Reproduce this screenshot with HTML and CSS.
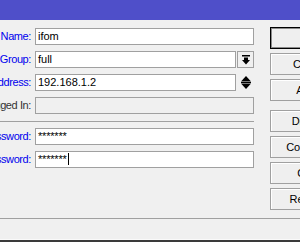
FILE: index.html
```html
<!DOCTYPE html>
<html>
<head>
<meta charset="utf-8">
<link rel="stylesheet" href="styles.css">
</head>
<body>
<div class="window">
  <div class="titlebar"></div>
  <div class="main">
    <div class="form">
      <span class="lbl">Name:</span>
      <div class="field">ifom</div>
      <span class="lbl">Group:</span>
      <div class="combo">
        <div class="field">full</div>
        <div class="dropbtn">
          <svg width="8" height="10" viewBox="0 0 8 10"><rect x="0" y="0" width="8" height="1.5" fill="#000"/><path d="M2 2.5H6V5H8L4 9.5L0 5H2Z" fill="#000"/></svg>
        </div>
      </div>
      <span class="lbl">Allowed Address:</span>
      <div class="combo">
        <div class="field">192.168.1.2</div>
        <div class="spin">
          <svg width="10" height="13" viewBox="0 0 10 13"><path d="M5 0L10 5.5H0Z" fill="#000"/><rect x="0" y="6" width="10" height="1" fill="#000"/><path d="M0 7.5H10L5 13Z" fill="#000"/></svg>
        </div>
      </div>
      <span class="lbl dim">Last Logged In:</span>
      <div class="field disabled"></div>
      <div class="sep"></div>
      <span class="lbl">Password:</span>
      <div class="field pw">*******</div>
      <span class="lbl">Confirm Password:</span>
      <div class="field pw">*******<span class="caret"></span></div>
    </div>
    <div class="buttons">
      <div class="btn default">OK</div>
      <div class="btn">Cancel</div>
      <div class="btn">Apply</div>
      <div class="btn spaced">Disable</div>
      <div class="btn">Comment</div>
      <div class="btn">Copy</div>
      <div class="btn">Remove</div>
    </div>
  </div>
  <div class="status"></div>
  <div class="frame-bottom"></div>
</div>
</body>
</html>
```
FILE: styles.css
```css
body {
  margin: 0;
  background: #f0f0f0;
  font-family: "Liberation Sans", Arial, sans-serif;
}
.window {
  width: 300px;
  height: 242px;
  overflow: hidden;
  display: flex;
  flex-direction: column;
  background: #f0f0f0;
}
.titlebar {
  height: 20px;
  flex: none;
  background: #4f4fc9;
}
.main {
  height: 198px;
  flex: none;
  box-sizing: border-box;
  padding-top: 7px;
  display: flex;
}
.form {
  flex: none;
  margin-left: -69px;
  margin-top: 1px;
  display: grid;
  grid-template-columns: 100px 219px;
  column-gap: 4px;
  row-gap: 6px;
  align-content: start;
}
.lbl {
  font-size: 11px;
  letter-spacing: -0.4px;
  line-height: 17px;
  color: #0000ee;
  text-align: right;
  white-space: nowrap;
}
.lbl.dim {
  color: #333;
}
.field {
  height: 17px;
  box-sizing: border-box;
  border: 1px solid #a0a0a0;
  background: #fff;
  font-size: 11px;
  line-height: 15px;
  padding-left: 2px;
  color: #000;
  white-space: nowrap;
  overflow: hidden;
}
.field.disabled {
  background: #f0f0f0;
}
.field.pw {
  letter-spacing: -0.2px;
}
.caret {
  display: inline-block;
  width: 1px;
  height: 12px;
  background: #000;
  vertical-align: -2px;
  margin-left: 1px;
}
.combo {
  display: flex;
  gap: 1px;
}
.combo .field {
  flex: 1;
}
.dropbtn {
  width: 17px;
  height: 17px;
  box-sizing: border-box;
  border: 1px solid #a0a0a0;
  background: #f0f0f0;
  display: flex;
  align-items: center;
  justify-content: center;
}
.spin {
  width: 17px;
  height: 17px;
  display: flex;
  align-items: center;
  justify-content: center;
}
.sep {
  grid-column: 1 / -1;
  height: 2px;
  box-sizing: border-box;
  border-bottom: 1px solid #a0a0a0;
}
.buttons {
  flex: none;
  margin-left: 16px;
  display: flex;
  flex-direction: column;
  gap: 4px;
}
.btn {
  width: 80px;
  height: 22px;
  box-sizing: border-box;
  border: 1px solid #a0a0a0;
  background: #efefef;
  box-shadow: inset 1px 1px #fff;
  font-size: 11px;
  line-height: 20px;
  text-align: center;
  color: #000;
}
.btn.default {
  border-color: #000;
  box-shadow: inset 0 0 0 1px #8a8a8a;
}
.btn.spaced {
  margin-top: 5px;
}
.status {
  flex: none;
  height: 21px;
  border-top: 1px solid #a0a0a0;
  border-bottom: 1px solid #fafafa;
  box-sizing: content-box;
  height: 20px;
}
.frame-bottom {
  flex: none;
  height: 2px;
  background: #3a3a3a;
}
```
